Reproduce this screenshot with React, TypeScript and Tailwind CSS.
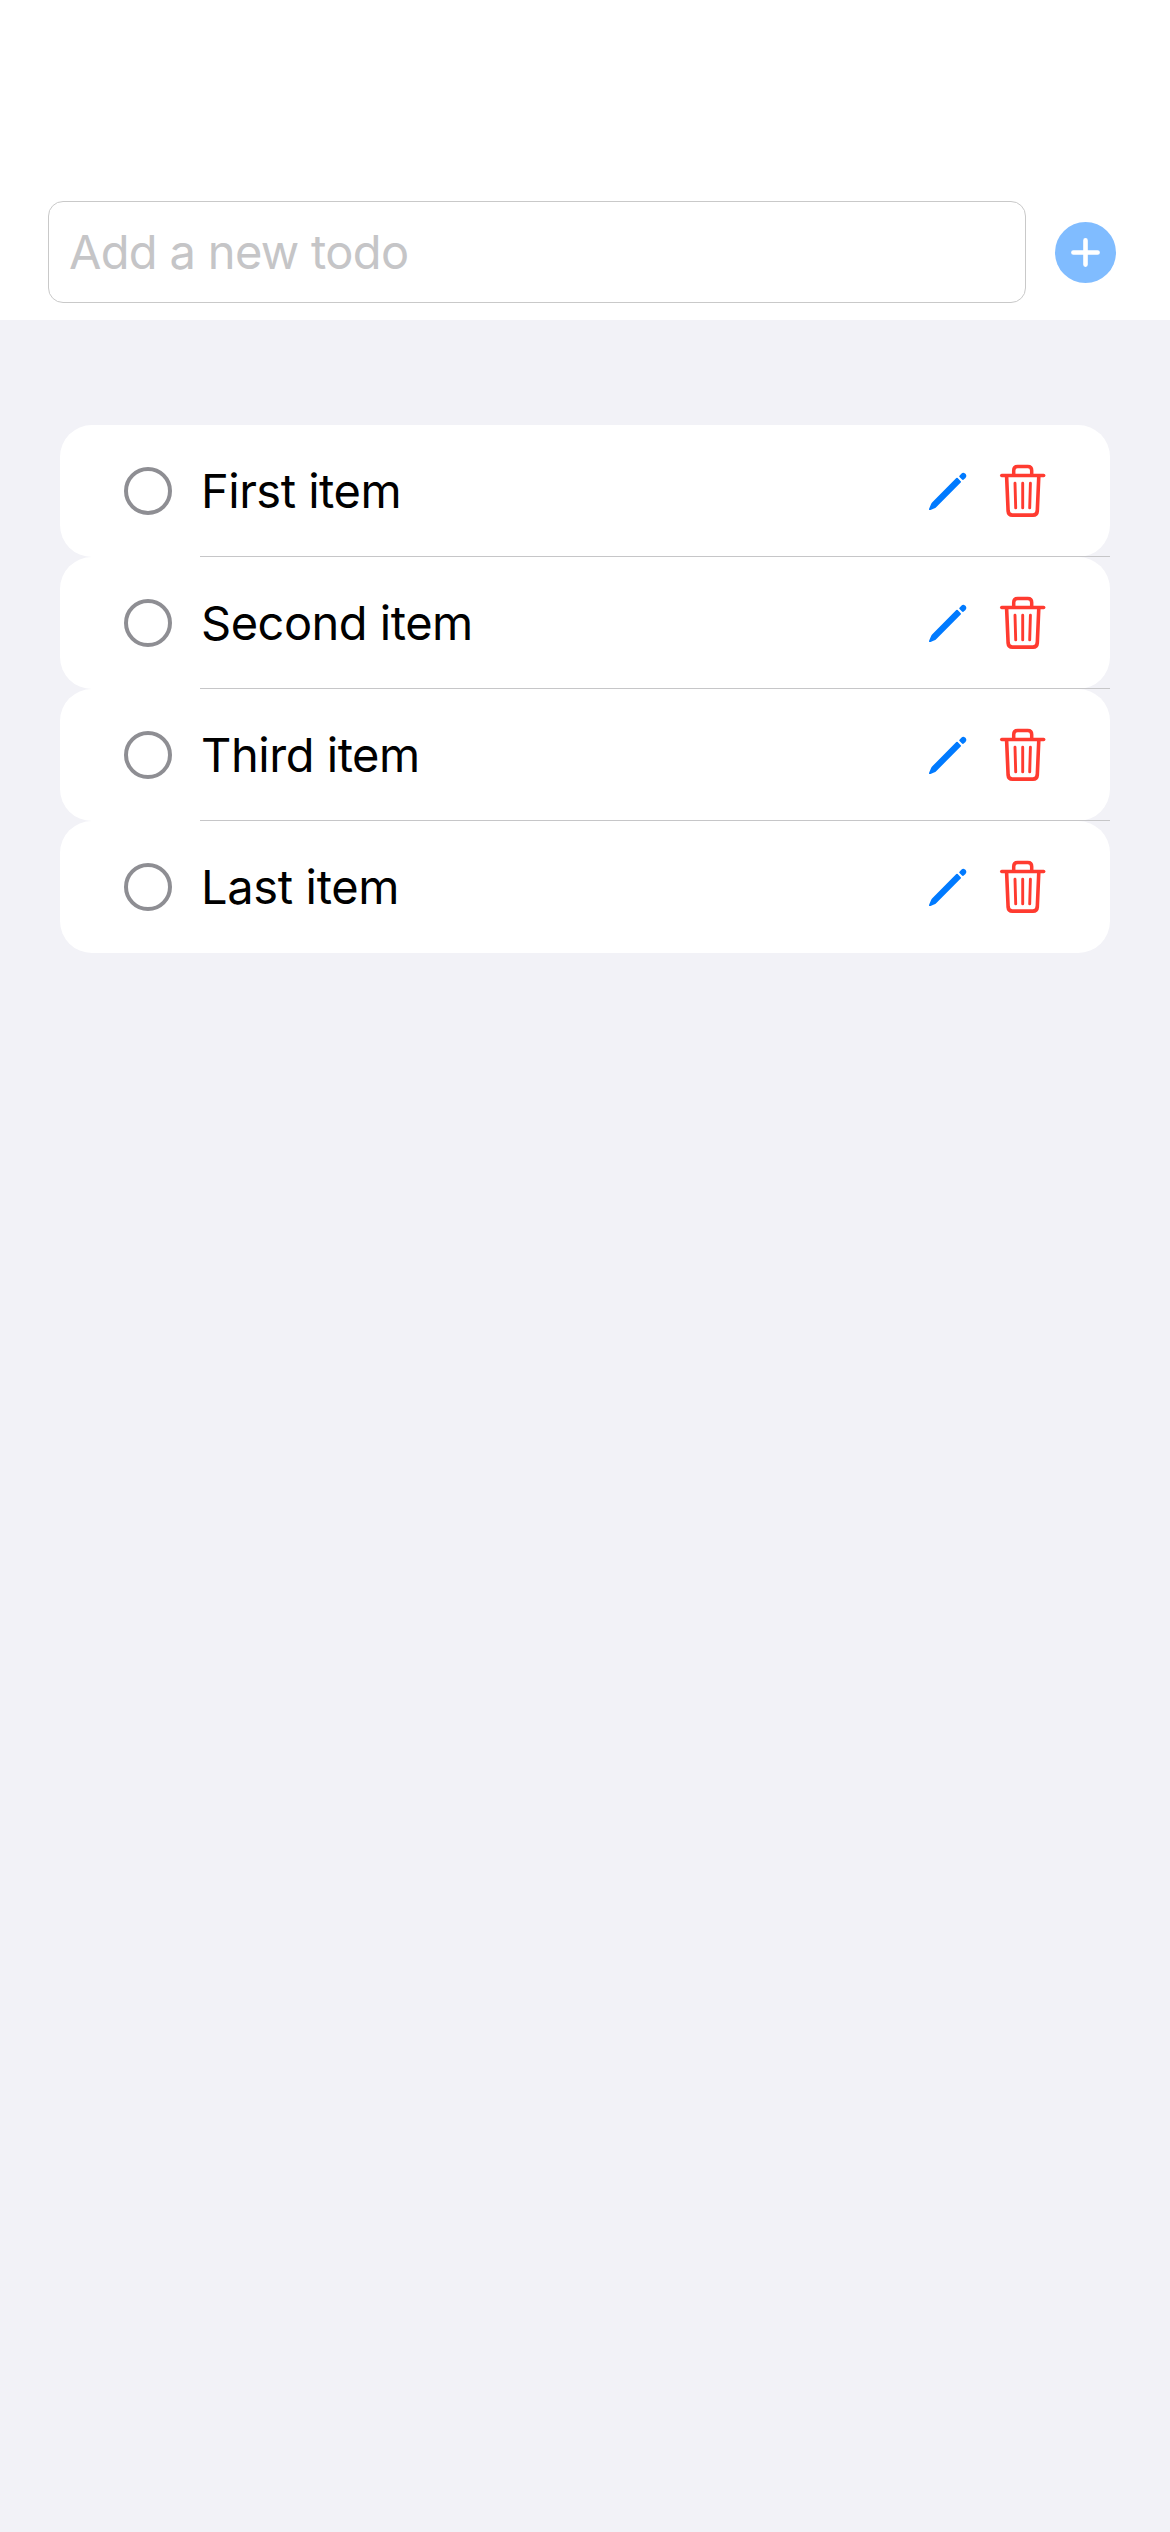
const items = [
  { text: "First item", tracking: "tracking-[-0.5px]" },
  { text: "Second item", tracking: "tracking-[-0.5px]" },
  { text: "Third item", tracking: "tracking-[-0.45px]" },
  { text: "Last item", tracking: "tracking-[-0.35px]" },
];

function PencilIcon() {
  return (
    <svg className="block h-[60px] w-[60px] shrink-0" viewBox="0 0 60 60" fill="#007aff">
      <path d="M42.7 17.1 45.7 20.2Q46.4 20.9 45.7 21.6L21.4 45.9Q20.4 46.9 19 47.5L15.5 48.9Q14.5 49.2 14.1 48.8Q13.8 48.4 14.2 47.4L15.9 43.5Q16.4 42.2 17.3 41.3L41.3 17.1Q42 16.4 42.7 17.1Z" />
      <path d="M44.5 14.8 46.3 12.8Q48.1 11 50 12.4L50.7 13.1Q52.3 15.1 50.5 16.9L48.4 18.8Q47.7 19.3 47 18.6L44.5 16.1Q43.9 15.4 44.5 14.8Z" />
    </svg>
  );
}

function TrashIcon() {
  return (
    <svg className="block h-[60px] w-[60px] shrink-0" viewBox="0 0 60 60" fill="none" stroke="#ff3b30" strokeLinecap="round" strokeLinejoin="round">
      <path strokeWidth="3.4" d="M8.7 14.5H50.7" />
      <path strokeWidth="3.5" d="M20.7 14V9.4Q20.7 5.5 24.6 5.5H34.8Q38.7 5.5 38.7 9.4V14" />
      <path strokeWidth="3.6" d="M13.6 15.2 15.1 50Q15.4 54.1 19.4 54.1H40Q44 54.1 44.3 50L45.8 15.2" />
      <path strokeWidth="2.9" d="M22 22.2 22.7 46.9M29.7 22.2V46.9M37.4 22.2 36.7 46.9" />
    </svg>
  );
}

export default function App() {
  return (
    <div className="h-[2532px] w-[1170px] overflow-hidden bg-[#f2f2f7] font-['Inter',sans-serif]">
      <header className="flex h-[320px] items-start bg-white pt-[201px] pl-12">
        <input
          aria-label="Add a new todo"
          placeholder="Add a new todo"
          className="h-[102px] w-[978px] rounded-[15px] border border-[#c9c9c9] bg-white px-5 pb-[2px] text-[47px] tracking-[-0.67px] outline-none placeholder:text-[#c5c5c7]"
        />
        <button aria-label="Add" className="mt-[21px] ml-[29px] flex h-[61px] w-[61px] items-center justify-center rounded-full bg-[#80bcff]">
          <svg className="h-[61px] w-[61px]" viewBox="0 0 61 61" fill="none" stroke="white" strokeWidth="4.6" strokeLinecap="round">
            <path d="M18.4 30.5H42.6M30.5 18.4V42.6" />
          </svg>
        </button>
      </header>
      <main className="px-[60px] pt-[105px]">
        {items.map((item, i) => (
          <div key={item.text} className="relative flex h-[132px] items-center rounded-[32px] bg-white pr-[57px] pl-16">
            <span className="h-12 w-12 shrink-0 rounded-full border-4 border-[#8e8e93]" />
            <span className={`ml-[29px] flex-1 text-[47px] leading-[60px] text-black ${item.tracking}`}>{item.text}</span>
            <PencilIcon />
            <span className="ml-[18px]">
              <TrashIcon />
            </span>
            {i < items.length - 1 && <span className="absolute right-0 bottom-0 left-[140px] h-px bg-[#c6c6c8]" />}
          </div>
        ))}
      </main>
    </div>
  );
}
